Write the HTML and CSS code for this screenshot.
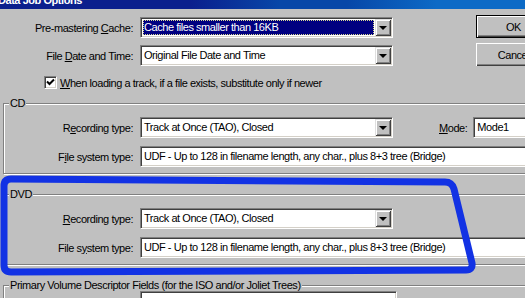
FILE: index.html
```html
<!DOCTYPE html>
<html>
<head>
<meta charset="utf-8">
<title>Data Job Options</title>
<link rel="stylesheet" href="styles.css">
</head>
<body>
<div class="dialog">
  <div class="titlebar"><span class="title">Data Job Options</span></div>
  <div class="top">
    <div class="top-fields">
      <div class="row">
        <span class="lbl">Pre-mastering <u>C</u>ache:</span>
        <div class="combo"><span class="combo-text sel"><span class="focus">Cache files smaller than 16KB</span></span><span class="arrow"></span></div>
      </div>
      <div class="row">
        <span class="lbl">File <u>D</u>ate and Time:</span>
        <div class="combo"><span class="combo-text">Original File Date and Time</span><span class="arrow"></span></div>
      </div>
      <div class="check-row">
        <span class="checkbox"><svg width="9" height="9" viewBox="0 0 9 9"><path d="M1 3.5 L3.5 6 L8 1.5" fill="none" stroke="#000" stroke-width="2"/></svg></span>
        <span><u>W</u>hen loading a track, if a file exists, substitute only if newer</span>
      </div>
    </div>
    <div class="buttons">
      <button class="btn btn-default">OK</button>
      <button class="btn">Cancel</button>
    </div>
  </div>

  <fieldset class="group">
    <legend>CD</legend>
    <div class="group-rows">
      <div class="row">
        <span class="lbl lbl-in">R<u>e</u>cording type:</span>
        <div class="combo"><span class="combo-text">Track at Once (TAO), Closed</span><span class="arrow"></span></div>
        <span class="mode-lbl"><u>M</u>ode:</span>
        <div class="field field-mode">Mode1</div>
      </div>
      <div class="row">
        <span class="lbl lbl-in">F<u>i</u>le system type:</span>
        <div class="field field-wide">UDF - Up to 128 in filename length, any char., plus 8+3 tree (Bridge)</div>
      </div>
    </div>
  </fieldset>

  <fieldset class="group">
    <legend>DVD</legend>
    <div class="group-rows">
      <div class="row">
        <span class="lbl lbl-in"><u>R</u>ecording type:</span>
        <div class="combo"><span class="combo-text">Track at Once (TAO), Closed</span><span class="arrow"></span></div>
      </div>
      <div class="row">
        <span class="lbl lbl-in">File s<u>y</u>stem type:</span>
        <div class="field field-wide">UDF - Up to 128 in filename length, any char., plus 8+3 tree (Bridge)</div>
      </div>
    </div>
  </fieldset>

  <fieldset class="group">
    <legend>Primary Volume Descriptor Fields (for the ISO and/or Joliet Trees)</legend>
    <div class="group-rows pv-rows">
      <div class="row">
        <span class="lbl lbl-in"></span>
        <div class="field field-pv"></div>
      </div>
    </div>
  </fieldset>
</div>

<svg class="marker" width="525" height="298" viewBox="0 0 525 298">
  <path d="M4,186 Q4,179 11,179 L445,182 Q452,182 454,189 L472,263 Q473,270 466,270 L11,272 Q4,272 4,265 Z" fill="none" stroke="#1232e4" stroke-width="7" stroke-linejoin="round"/>
</svg>
</body>
</html>
```

FILE: styles.css
```css
html, body {
  margin: 0;
  padding: 0;
}
body {
  width: 525px;
  height: 298px;
  overflow: hidden;
  background: #c0c0c0;
  font-family: "Liberation Sans", Arial, sans-serif;
  font-size: 11px;
  letter-spacing: -0.45px;
  color: #000;
  position: relative;
}
.dialog {
  width: 560px;
}
.titlebar {
  height: 9px;
  overflow: hidden;
  background: linear-gradient(to right, #0b1f8d 0%, #0b1f8d 34%, #0747a8 50%, #0747a8 62%, #0c6ac6 78%, #0c6ac6 100%);
}
.title {
  display: block;
  margin-top: -6px;
  margin-left: -2px;
  line-height: 12px;
  font-weight: bold;
  color: #fff;
}
.top {
  display: grid;
  grid-template-columns: 476px 75px;
  padding-top: 6px;
}
.top-fields {
  display: flex;
  flex-direction: column;
  gap: 7px;
  padding-top: 2px;
}
.row {
  display: flex;
  align-items: center;
  height: 21px;
}
.lbl {
  flex: none;
  width: 133px;
  margin-right: 7px;
  text-align: right;
  white-space: nowrap;
}
.lbl-in {
  width: 129px;
}
.combo, .field, .checkbox {
  box-sizing: border-box;
  background: #fff;
  border: 1px solid;
  border-color: #808080 #fff #fff #808080;
  box-shadow: inset 1px 1px 0 #404040, inset -1px -1px 0 #d4d0c8;
}
.combo {
  flex: none;
  width: 253px;
  height: 21px;
  padding: 1px;
  display: flex;
}
.combo-text {
  flex: 1;
  margin: 1px;
  padding-left: 1px;
  line-height: 15px;
  white-space: nowrap;
  overflow: hidden;
}
.sel {
  background: #000080;
  color: #fff;
}
.focus {
  display: block;
  margin-left: -1px;
  padding-left: 1px;
  outline: 1px dotted #d8d890;
  outline-offset: -1px;
  height: 15px;
}
.arrow {
  flex: none;
  width: 16px;
  height: 17px;
  box-sizing: border-box;
  background: #c0c0c0;
  box-shadow: inset 1px 1px 0 #dfdfdf, inset -1px -1px 0 #404040, inset 2px 2px 0 #fff, inset -2px -2px 0 #808080;
  display: flex;
  align-items: center;
  justify-content: center;
}
.arrow::after {
  content: "";
  width: 0;
  height: 0;
  border-left: 4px solid transparent;
  border-right: 4px solid transparent;
  border-top: 4px solid #000;
  margin-top: 1px;
}
.check-row {
  display: flex;
  align-items: center;
  margin-top: 3px;
  padding-left: 44px;
  height: 13px;
  white-space: nowrap;
}
.checkbox {
  width: 13px;
  height: 13px;
  margin-right: 3px;
  display: flex;
  align-items: center;
  justify-content: center;
  flex: none;
}
.buttons {
  display: flex;
  flex-direction: column;
  gap: 5px;
}
.btn {
  box-sizing: border-box;
  width: 75px;
  height: 23px;
  padding: 0;
  font: inherit;
  letter-spacing: inherit;
  color: #000;
  background: #c0c0c0;
  border: none;
  box-shadow: inset 1px 1px 0 #fff, inset -1px -1px 0 #404040, inset -2px -2px 0 #808080;
}
.btn-default {
  border: 1px solid #000;
}
.group {
  margin: 8px 0 0 3px;
  padding: 0 12px 6px 0;
  border: 1px solid #808080;
  box-shadow: inset 1px 1px 0 #fff, 1px 1px 0 #fff;
  min-width: 0;
}
.group + .group {
  margin-top: 14px;
}
.group legend {
  margin-left: 5px;
  padding: 0 1px;
  line-height: 12px;
  background: #c0c0c0;
  white-space: nowrap;
}
.group-rows {
  display: flex;
  flex-direction: column;
  gap: 8px;
  padding-top: 8px;
}
.pv-rows {
  padding-top: 0;
}
.mode-lbl {
  flex: none;
  margin-left: 46px;
  margin-right: 6px;
}
.field {
  height: 21px;
  padding: 0 3px;
  line-height: 19px;
  white-space: nowrap;
  overflow: hidden;
}
.field-mode {
  flex: none;
  width: 100px;
}
.field-wide {
  flex: 1;
}
.field-pv {
  flex: none;
  width: 257px;
}
.marker {
  position: absolute;
  left: 0;
  top: 0;
  pointer-events: none;
}
```
